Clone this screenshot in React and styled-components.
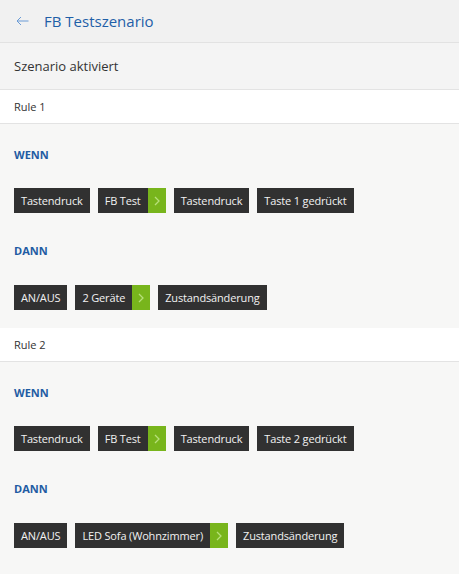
import React from "react";
import styled, { createGlobalStyle } from "styled-components";

const Global = createGlobalStyle`
  html, body { margin: 0; padding: 0; background: #f7f7f6; }
  body { font-family: "Open Sans", "Liberation Sans", sans-serif; }
`;

const Page = styled.div`
  width: 459px;
  min-height: 574px;
  background: #f7f7f6;
`;

const Header = styled.header`
  height: 42px;
  display: flex;
  align-items: center;
  gap: 15px;
  padding-left: 15px;
  background: #f1f1f1;
  border-bottom: 1px solid #e2e2e2;
  box-sizing: content-box;
`;

const BackBtn = styled.button`
  border: 0;
  background: none;
  padding: 0;
  width: 14px;
  height: 14px;
  display: flex;
  align-items: center;
  justify-content: center;
  color: #5b8fcf;
  cursor: pointer;
`;

const Title = styled.h1`
  margin: 0;
  font-size: 15px;
  font-weight: 400;
  color: #1f5fa8;
  line-height: 20px;
`;

const StatusRow = styled.div`
  height: 46px;
  display: flex;
  align-items: center;
  padding-left: 14px;
  background: #f4f4f4;
  border-bottom: 1px solid #e3e3e3;
  font-size: 13px;
  color: #333;
`;

const RuleHeader = styled.div`
  height: 33px;
  display: flex;
  align-items: center;
  padding-left: 14px;
  background: #ffffff;
  border-bottom: 1px solid #e3e3e3;
  font-size: 11px;
  color: #333;
`;

const RuleBody = styled.div`
  padding: 23px 14px 18px;
  display: flex;
  flex-direction: column;
`;

const SectionLabel = styled.div`
  font-size: 11px;
  font-weight: 700;
  line-height: 16px;
  color: #1f5ca3;
  margin-top: ${(p) => (p.$first ? "0" : "30px")};
  margin-bottom: ${(p) => (p.$first ? "25px" : "26px")};
`;

const ChipRow = styled.div`
  display: flex;
  gap: 8px;
`;

const Chip = styled.div`
  height: 25px;
  display: flex;
  align-items: stretch;
  background: #313131;
  color: #f2f2f2;
  font-size: 11px;
  letter-spacing: -0.15px;
`;

const ChipText = styled.span`
  display: flex;
  align-items: center;
  padding: 0 7px;
`;

const ChipArrow = styled.span`
  width: 18px;
  display: flex;
  align-items: center;
  justify-content: center;
  background: #78b51c;
`;

function Chevron() {
  return (
    <svg width="6" height="10" viewBox="0 0 6 10">
      <path d="M1 1 L5 5 L1 9" fill="none" stroke="#b7e07a" strokeWidth="1.3" />
    </svg>
  );
}

function Tag({ label, link }) {
  return (
    <Chip>
      <ChipText>{label}</ChipText>
      {link && (
        <ChipArrow>
          <Chevron />
        </ChipArrow>
      )}
    </Chip>
  );
}

const rules = [
  {
    name: "Rule 1",
    when: [
      { label: "Tastendruck" },
      { label: "FB Test", link: true },
      { label: "Tastendruck" },
      { label: "Taste 1 gedrückt" },
    ],
    then: [
      { label: "AN/AUS" },
      { label: "2 Geräte", link: true },
      { label: "Zustandsänderung" },
    ],
  },
  {
    name: "Rule 2",
    when: [
      { label: "Tastendruck" },
      { label: "FB Test", link: true },
      { label: "Tastendruck" },
      { label: "Taste 2 gedrückt" },
    ],
    then: [
      { label: "AN/AUS" },
      { label: "LED Sofa (Wohnzimmer)", link: true },
      { label: "Zustandsänderung" },
    ],
  },
];

export default function App() {
  return (
    <Page>
      <Global />
      <Header>
        <BackBtn aria-label="Zurück">
          <svg width="13" height="10" viewBox="0 0 13 10">
            <path d="M12.5 5 H1 M5 1 L1 5 L5 9" fill="none" stroke="#6a9bd6" strokeWidth="1" />
          </svg>
        </BackBtn>
        <Title>FB Testszenario</Title>
      </Header>
      <StatusRow>Szenario aktiviert</StatusRow>
      {rules.map((r) => (
        <section key={r.name}>
          <RuleHeader>{r.name}</RuleHeader>
          <RuleBody>
            <SectionLabel $first>WENN</SectionLabel>
            <ChipRow>
              {r.when.map((c, i) => (
                <Tag key={i} {...c} />
              ))}
            </ChipRow>
            <SectionLabel>DANN</SectionLabel>
            <ChipRow>
              {r.then.map((c, i) => (
                <Tag key={i} {...c} />
              ))}
            </ChipRow>
          </RuleBody>
        </section>
      ))}
    </Page>
  );
}
